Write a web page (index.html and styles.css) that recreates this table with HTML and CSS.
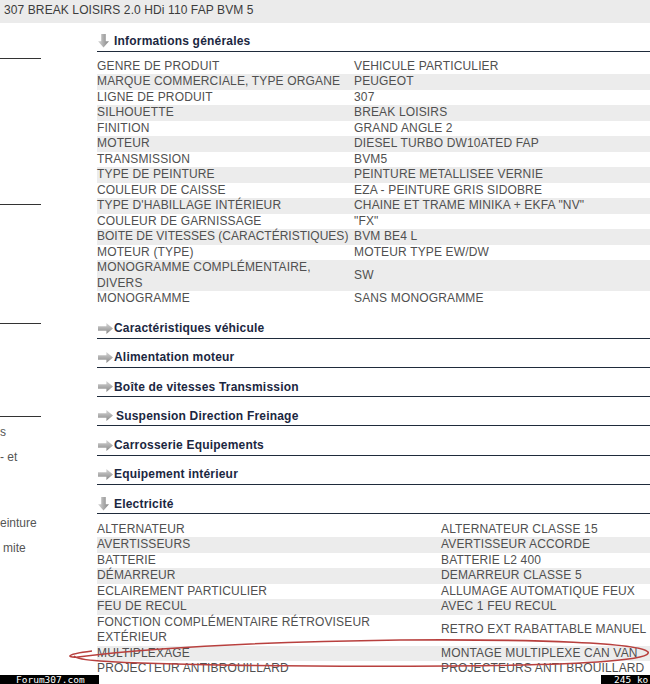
FILE: index.html
```html
<!DOCTYPE html>
<html lang="fr">
<head>
<meta charset="utf-8">
<title>307 BREAK LOISIRS 2.0 HDi 110 FAP BVM 5</title>
<link rel="stylesheet" href="styles.css">
</head>
<body>
<div class="topbar">307 BREAK LOISIRS 2.0 HDi 110 FAP BVM 5</div>
<div class="layout">
  <aside class="sidebar">
    <div class="side-block b1"></div>
    <div class="side-block b2"></div>
    <div class="side-block b3"></div>
    <div class="side-block b4"></div>
    <div class="side-text">
      <p>s</p>
      <p>- et</p>
    </div>
    <div class="side-text t2">
      <p>einture</p>
      <p class="indent">mite</p>
    </div>
  </aside>
  <main class="main">
    <section class="section open">
      <h2 class="sec-head">
        <svg class="ic" width="16" height="14" viewBox="0 0 16 14"><defs><linearGradient id="gd1" x1="0" x2="1" y1="0" y2="0"><stop offset="0" stop-color="#d6d6d6"/><stop offset="1" stop-color="#858585"/></linearGradient></defs><path d="M3.2 0h4.6v7.2h3.2L5.5 13.6 0 7.2h3.2z" fill="url(#gd1)"/></svg>
        <span>Informations générales</span>
      </h2>
      <table class="spec general">
        <colgroup><col class="c1"><col></colgroup>
        <tr><td>GENRE DE PRODUIT</td><td>VEHICULE PARTICULIER</td></tr>
        <tr><td>MARQUE COMMERCIALE, TYPE ORGANE</td><td>PEUGEOT</td></tr>
        <tr><td>LIGNE DE PRODUIT</td><td>307</td></tr>
        <tr><td>SILHOUETTE</td><td>BREAK LOISIRS</td></tr>
        <tr><td>FINITION</td><td>GRAND ANGLE 2</td></tr>
        <tr><td>MOTEUR</td><td>DIESEL TURBO DW10ATED FAP</td></tr>
        <tr><td>TRANSMISSION</td><td>BVM5</td></tr>
        <tr><td>TYPE DE PEINTURE</td><td>PEINTURE METALLISEE VERNIE</td></tr>
        <tr><td>COULEUR DE CAISSE</td><td>EZA - PEINTURE GRIS SIDOBRE</td></tr>
        <tr><td>TYPE D'HABILLAGE INTÉRIEUR</td><td>CHAINE ET TRAME MINIKA + EKFA "NV"</td></tr>
        <tr><td>COULEUR DE GARNISSAGE</td><td>"FX"</td></tr>
        <tr><td class="tight">BOITE DE VITESSES (CARACTÉRISTIQUES)</td><td>BVM BE4 L</td></tr>
        <tr><td>MOTEUR (TYPE)</td><td>MOTEUR TYPE EW/DW</td></tr>
        <tr><td>MONOGRAMME COMPLÉMENTAIRE,<br>DIVERS</td><td>SW</td></tr>
        <tr><td>MONOGRAMME</td><td>SANS MONOGRAMME</td></tr>
      </table>
    </section>

    <section class="section">
      <h2 class="sec-head">
        <svg class="ic" width="16" height="11" viewBox="0 0 16 11"><defs><linearGradient id="gr1" x1="0" x2="0" y1="0" y2="1"><stop offset="0" stop-color="#d6d6d6"/><stop offset="1" stop-color="#888"/></linearGradient></defs><path d="M0 3.2h8.4V0L15 5.5 8.4 11V7.8H0z" fill="url(#gr1)"/></svg>
        <span>Caractéristiques véhicule</span>
      </h2>
    </section>
    <section class="section">
      <h2 class="sec-head">
        <svg class="ic" width="16" height="11" viewBox="0 0 16 11"><defs><linearGradient id="gr2" x1="0" x2="0" y1="0" y2="1"><stop offset="0" stop-color="#d6d6d6"/><stop offset="1" stop-color="#888"/></linearGradient></defs><path d="M0 3.2h8.4V0L15 5.5 8.4 11V7.8H0z" fill="url(#gr2)"/></svg>
        <span>Alimentation moteur</span>
      </h2>
    </section>
    <section class="section">
      <h2 class="sec-head">
        <svg class="ic" width="16" height="11" viewBox="0 0 16 11"><defs><linearGradient id="gr3" x1="0" x2="0" y1="0" y2="1"><stop offset="0" stop-color="#d6d6d6"/><stop offset="1" stop-color="#888"/></linearGradient></defs><path d="M0 3.2h8.4V0L15 5.5 8.4 11V7.8H0z" fill="url(#gr3)"/></svg>
        <span>Boîte de vitesses Transmission</span>
      </h2>
    </section>
    <section class="section">
      <h2 class="sec-head">
        <svg class="ic" width="16" height="11" viewBox="0 0 16 11"><defs><linearGradient id="gr4" x1="0" x2="0" y1="0" y2="1"><stop offset="0" stop-color="#d6d6d6"/><stop offset="1" stop-color="#888"/></linearGradient></defs><path d="M0 3.2h8.4V0L15 5.5 8.4 11V7.8H0z" fill="url(#gr4)"/></svg>
        <span class="pad">Suspension Direction Freinage</span>
      </h2>
    </section>
    <section class="section">
      <h2 class="sec-head">
        <svg class="ic" width="16" height="11" viewBox="0 0 16 11"><defs><linearGradient id="gr5" x1="0" x2="0" y1="0" y2="1"><stop offset="0" stop-color="#d6d6d6"/><stop offset="1" stop-color="#888"/></linearGradient></defs><path d="M0 3.2h8.4V0L15 5.5 8.4 11V7.8H0z" fill="url(#gr5)"/></svg>
        <span>Carrosserie Equipements</span>
      </h2>
    </section>
    <section class="section">
      <h2 class="sec-head">
        <svg class="ic" width="16" height="11" viewBox="0 0 16 11"><defs><linearGradient id="gr6" x1="0" x2="0" y1="0" y2="1"><stop offset="0" stop-color="#d6d6d6"/><stop offset="1" stop-color="#888"/></linearGradient></defs><path d="M0 3.2h8.4V0L15 5.5 8.4 11V7.8H0z" fill="url(#gr6)"/></svg>
        <span>Equipement intérieur</span>
      </h2>
    </section>

    <section class="section open">
      <h2 class="sec-head">
        <svg class="ic" width="16" height="14" viewBox="0 0 16 14"><defs><linearGradient id="gd2" x1="0" x2="1" y1="0" y2="0"><stop offset="0" stop-color="#d6d6d6"/><stop offset="1" stop-color="#858585"/></linearGradient></defs><path d="M3.2 0h4.6v7.2h3.2L5.5 13.6 0 7.2h3.2z" fill="url(#gd2)"/></svg>
        <span>Electricité</span>
      </h2>
      <table class="spec elec">
        <colgroup><col class="c1"><col></colgroup>
        <tr><td>ALTERNATEUR</td><td>ALTERNATEUR CLASSE 15</td></tr>
        <tr><td>AVERTISSEURS</td><td>AVERTISSEUR ACCORDE</td></tr>
        <tr><td>BATTERIE</td><td>BATTERIE L2 400</td></tr>
        <tr><td>DÉMARREUR</td><td>DEMARREUR CLASSE 5</td></tr>
        <tr><td>ECLAIREMENT PARTICULIER</td><td>ALLUMAGE AUTOMATIQUE FEUX</td></tr>
        <tr><td>FEU DE RECUL</td><td>AVEC 1 FEU RECUL</td></tr>
        <tr><td>FONCTION COMPLÉMENTAIRE RÉTROVISEUR<br>EXTÉRIEUR</td><td>RETRO EXT RABATTABLE MANUEL</td></tr>
        <tr><td>MULTIPLEXAGE</td><td>MONTAGE MULTIPLEXE CAN VAN</td></tr>
        <tr><td>PROJECTEUR ANTIBROUILLARD</td><td>PROJECTEURS ANTI BROUILLARD</td></tr>
      </table>
    </section>
  </main>
</div>

<svg class="mark" width="650" height="684" viewBox="0 0 650 684">
  <path d="M92 651 C 60 655, 70 658, 78 657 C 150 648, 250 642, 400 640 C 540 639, 640 643, 648 652 C 652 659, 600 665, 450 666 C 300 667, 160 665, 100 661 C 85 660, 76 658, 74 656" fill="none" stroke="#b8403e" stroke-width="1.6"/>
</svg>
<div class="badge badge-left">Forum307.com</div>
<div class="badge badge-right">245 ko</div>
</body>
</html>
```

FILE: styles.css
```css
html, body {
  margin: 0;
  padding: 0;
  height: 684px;
  overflow: hidden;
  background: #fff;
}
body {
  position: relative;
  font-family: "Liberation Sans", Arial, sans-serif;
  font-size: 12px;
  color: #505050;
}
.topbar {
  height: 23px;
  line-height: 21px;
  background: #ebebeb;
  padding-left: 4px;
  color: #3c3c3c;
  white-space: nowrap;
  letter-spacing: 0.1px;
}
.layout {
  display: flex;
  align-items: flex-start;
}
.sidebar {
  width: 41px;
  flex: none;
  overflow: hidden;
}
.side-block {
  border-bottom: 1px solid #333;
}
.b1 { height: 35px; }
.b2 { height: 145px; }
.b3 { height: 118px; }
.b4 { height: 92px; }
.side-text {
  padding-top: 3px;
  white-space: nowrap;
  color: #555;
}
.side-text p {
  margin: 0;
  line-height: 25px;
}
.side-text .indent { padding-left: 3px; }
.side-text.t2 { margin-top: 41px; padding-top: 0; }

.main {
  margin-left: 56px;
  flex: 1;
  min-width: 0;
  padding-top: 8.5px;
}
.section {
  margin-bottom: 9.3px;
}
.section.open {
  margin-bottom: 12px;
}
.sec-head {
  display: flex;
  align-items: center;
  height: 19px;
  margin: 0;
  border-bottom: 1px solid #1f2b3b;
  font-size: 12px;
  font-weight: bold;
  color: #1b2741;
  white-space: nowrap;
  letter-spacing: 0.2px;
}
.section.open .sec-head {
  margin-bottom: 7.5px;
}
.sec-head .ic {
  flex: none;
  margin-left: 1px;
}
.sec-head .pad { padding-left: 2px; }

.spec {
  width: 100%;
  border-collapse: collapse;
  table-layout: fixed;
  letter-spacing: 0.15px;
}
.spec td {
  padding: 0;
  line-height: 15.47px;
  vertical-align: middle;
  white-space: nowrap;
  overflow: visible;
}
.spec td.tight {
  letter-spacing: 0;
}
.spec tr:nth-child(even) {
  background: #ececec;
}
.spec.general .c1 { width: 257px; }
.spec.elec .c1 { width: 344px; }

.mark {
  position: absolute;
  left: 0;
  top: 0;
  pointer-events: none;
}
.badge {
  position: absolute;
  bottom: 0;
  height: 9px;
  background: #000;
  color: #fff;
  font-family: "DejaVu Sans Mono", monospace;
  font-size: 9.5px;
  line-height: 10px;
  overflow: hidden;
  white-space: nowrap;
}
.badge-left {
  left: 0;
  width: 83px;
  padding-left: 16px;
}
.badge-right {
  right: 0;
  width: 36px;
  padding-left: 13px;
}
```
